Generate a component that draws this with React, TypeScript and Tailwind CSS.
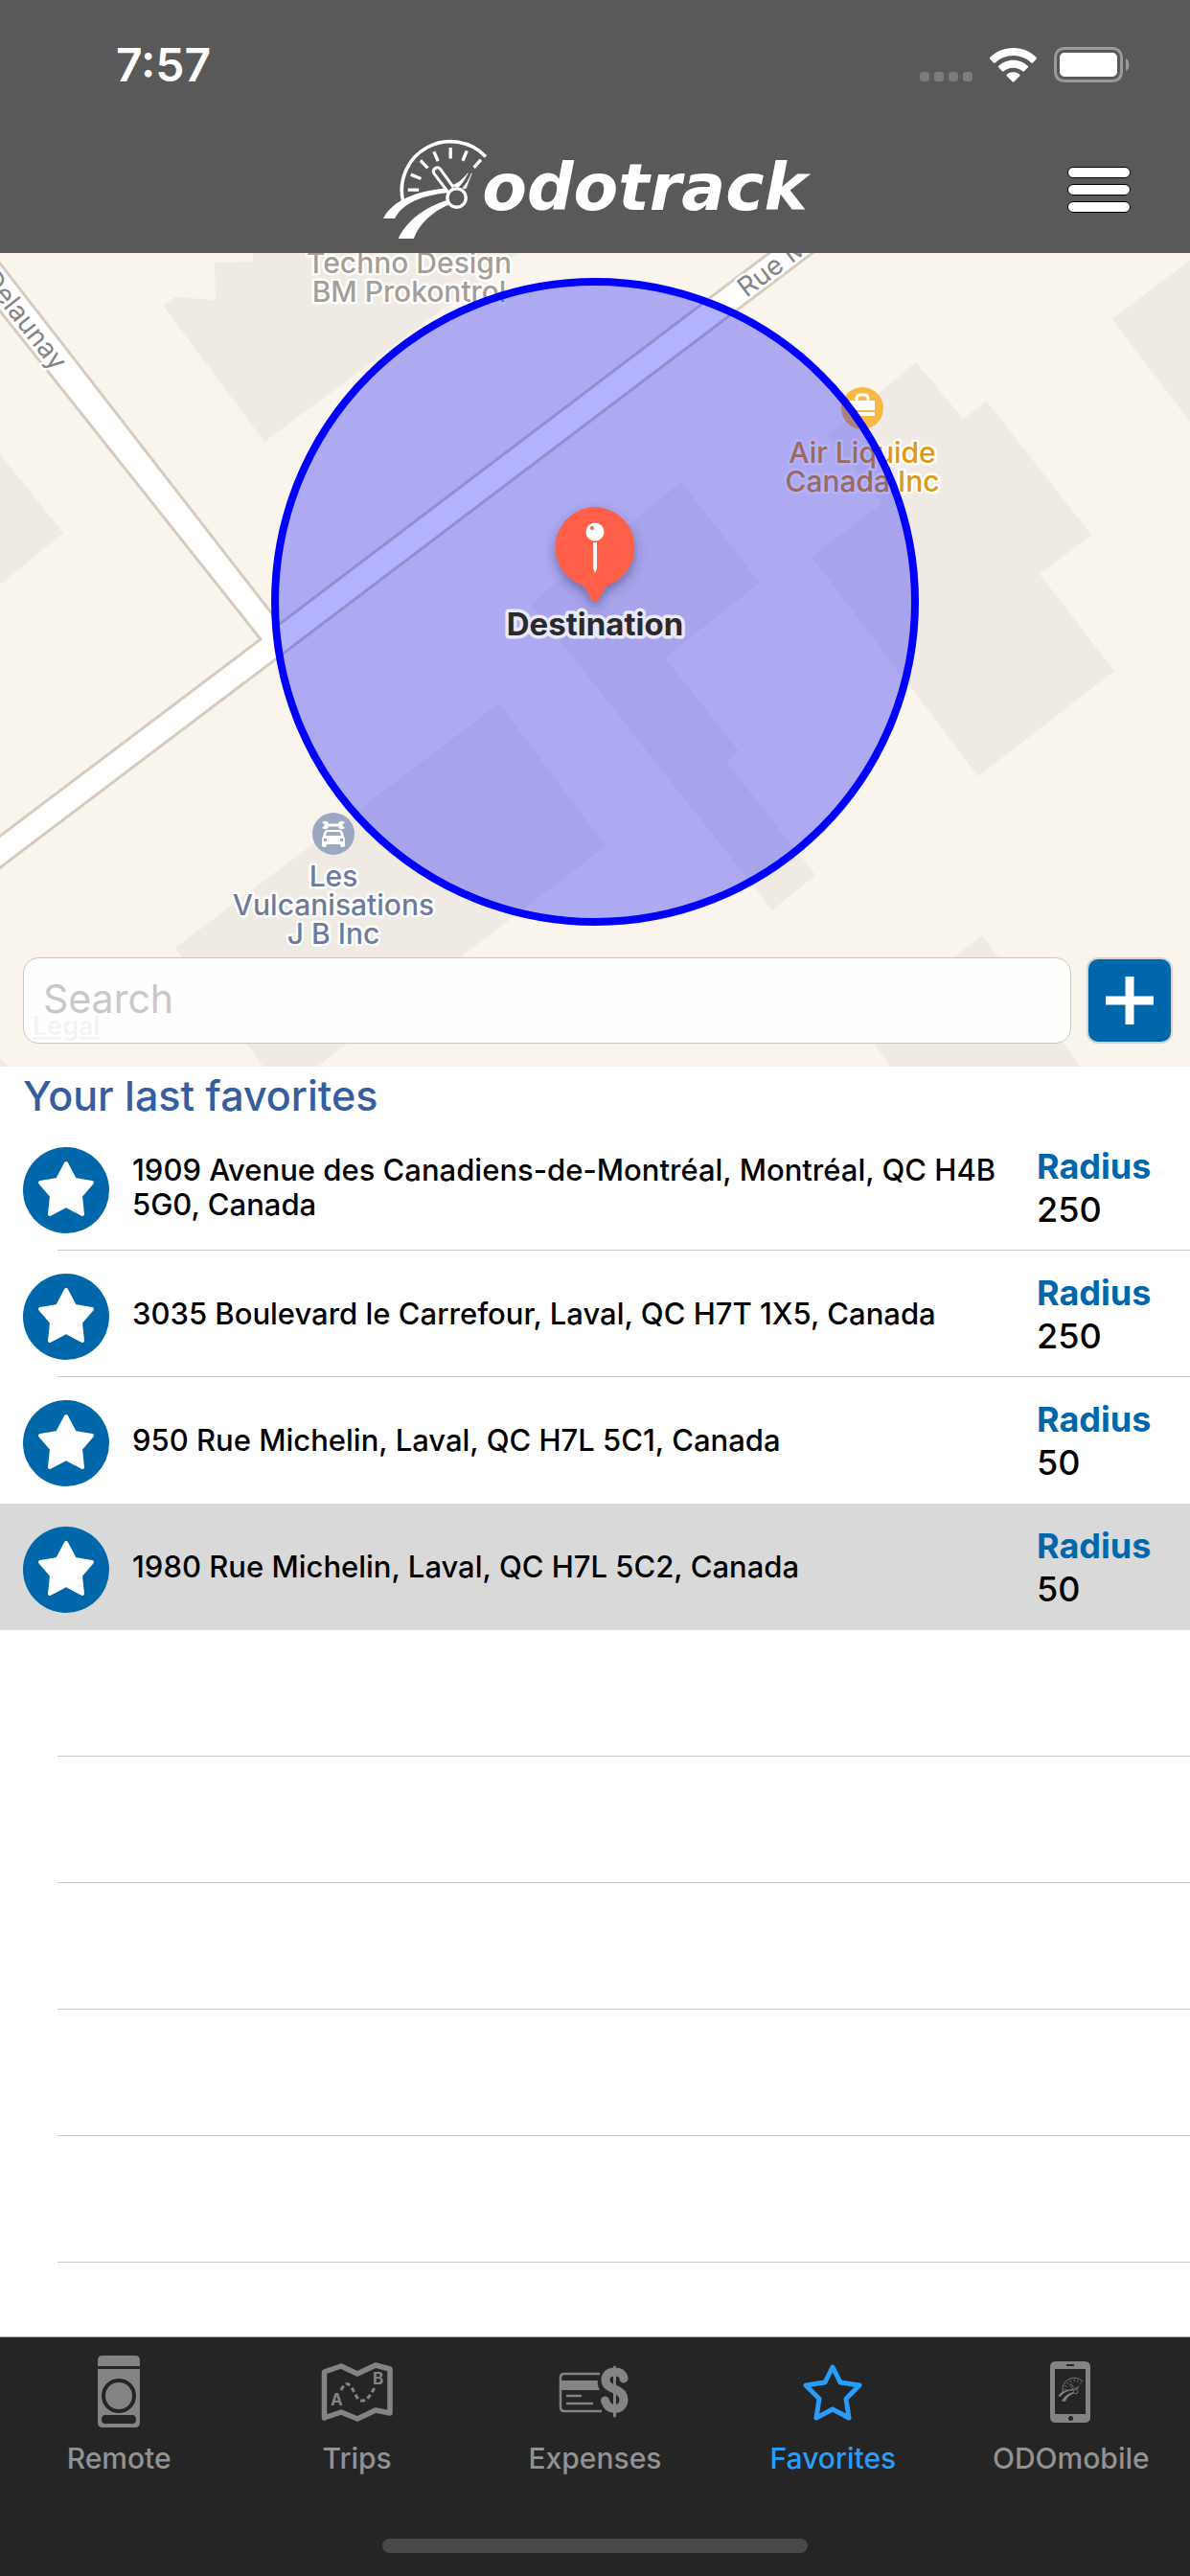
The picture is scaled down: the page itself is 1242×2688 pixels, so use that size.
import { useState } from "react";
import type { ReactNode } from "react";

const FAVORITES = [
  { address: "1909 Avenue des Canadiens-de-Montréal, Montréal, QC H4B 5G0, Canada", radius: 250 },
  { address: "3035 Boulevard le Carrefour, Laval, QC H7T 1X5, Canada", radius: 250 },
  { address: "950 Rue Michelin, Laval, QC H7L 5C1, Canada", radius: 50 },
  { address: "1980 Rue Michelin, Laval, QC H7L 5C2, Canada", radius: 50 },
];

const EMPTY_ROWS = [0, 1, 2, 3, 4];

function LogoMark(props: { className?: string; x?: number; y?: number; width?: number; height?: number }) {
  return (
    <svg {...props} viewBox="45 45 335 320" fill="none" stroke="currentColor" aria-hidden="true">
      <path d="M110 240A152 152 0 0 1 368 100" strokeWidth="11" />
      <path
        d="M258 72V106M309 82L296 113M353 110L331 134M206 84L219 114M164 112L187 136M134 156L166 169M125 204H159"
        strokeWidth="10"
      />
      <path d="M248 208L206 152A12 12 0 0 1 226 139L267 196" strokeWidth="9" />
      <circle cx="277" cy="229" r="29" strokeWidth="10" />
      <path d="M264 190Q290 180 312 152Q298 182 282 196ZM296 198Q312 182 324 152L306 200Z" fill="currentColor" strokeWidth="2" />
      <path
        d="M48 293C78 236 150 208 240 199L252 208L247 213C165 222 110 245 84 293ZM95 356C120 300 180 258 243 237L256 248C200 272 160 310 143 356Z"
        fill="currentColor"
        stroke="none"
      />
    </svg>
  );
}

function StatusBar() {
  return (
    <div className="flex h-[132px] items-start justify-between pl-[121px] pr-[62px] pt-[37px] text-white">
      <span className="text-[48px] font-semibold leading-[62px]">7:57</span>
      <div className="flex items-center pt-3">
        <div className="flex gap-[5px] pt-[25px]">
          <i className="size-[10px] rounded-[3px] bg-[#7c7c7c]" />
          <i className="size-[10px] rounded-[3px] bg-[#7c7c7c]" />
          <i className="size-[10px] rounded-[3px] bg-[#7c7c7c]" />
          <i className="size-[10px] rounded-[3px] bg-[#7c7c7c]" />
        </div>
        <svg className="ml-[18px] h-9 w-[49px]" viewBox="0 0 49 36" fill="currentColor" aria-hidden="true">
          <path d="M24.500 0C34 0 42.500 3.700 48.600 9.800C49.200 10.400 49.200 11.200 48.600 11.800L45 15.400C44.500 15.900 43.800 15.900 43.200 15.400C38.300 10.800 31.700 8 24.500 8S10.700 10.800 5.800 15.400C5.200 15.900 4.500 15.900 4 15.400L.4 11.800C-.2 11.200-.2 10.400.4 9.800C6.500 3.700 15 0 24.500 0Z" />
          <path d="M24.500 12.700C30.400 12.700 35.700 15 39.700 18.700C40.300 19.300 40.300 20 39.700 20.600L36 24.300C35.500 24.800 34.800 24.800 34.200 24.300C31.700 22 28.200 20.700 24.500 20.700S17.300 22 14.800 24.300C14.200 24.800 13.500 24.800 13 24.300L9.300 20.600C8.700 20 8.700 19.300 9.300 18.700C13.300 15 18.600 12.700 24.500 12.700Z" />
          <path d="M24.500 25.300C27 25.300 29.200 26.100 31 27.500C31.700 28 31.700 28.800 31.100 29.400L25.400 35.200C24.900 35.700 24.100 35.700 23.600 35.200L17.900 29.400C17.300 28.800 17.300 28 18 27.500C19.800 26.100 22 25.300 24.500 25.300Z" />
        </svg>
        <svg className="ml-[18px] h-[37px] w-20" viewBox="0 0 80 37" aria-hidden="true">
          <rect x="1.500" y="1.500" width="69" height="34" rx="9" fill="none" stroke="#9b9b9b" strokeWidth="3" />
          <rect x="6" y="6" width="60" height="25" rx="5" fill="#fff" />
          <path d="M75 12C79 14 80 23 75 25Z" fill="#9b9b9b" />
        </svg>
      </div>
    </div>
  );
}

function NavBar() {
  return (
    <div className="grid h-[132px] grid-cols-[1fr_auto_1fr] items-start text-white">
      <div />
      <div className="flex items-start pt-[13px]" role="img" aria-label="odotrack">
        <LogoMark className="h-[107px] w-28" />
        <span className="-ml-2 pt-4 font-['DejaVu_Sans',sans-serif] text-[68px] font-bold italic leading-[70px]">
          odotrack
        </span>
      </div>
      <button aria-label="Menu" className="mr-[62px] mt-[42px] flex flex-col gap-[6px] justify-self-end">
        <span className="h-3 w-[66px] rounded-full border border-black bg-white" />
        <span className="h-3 w-[66px] rounded-full border border-black bg-white" />
        <span className="h-3 w-[66px] rounded-full border border-black bg-white" />
      </button>
    </div>
  );
}

const LABEL = "stroke-white text-[30px] font-medium [paint-order:stroke] [stroke-width:5px] [stroke-linejoin:round]";

function MapView() {
  return (
    <svg
      className="block h-auto w-full"
      viewBox="0 264 1242 849"
      role="img"
      aria-label="Map around the destination"
    >
      <defs>
        <filter id="pinShadow" x="-50%" y="-50%" width="200%" height="200%">
          <feDropShadow dx="0" dy="5" stdDeviation="6" floodColor="#303060" floodOpacity="0.5" />
        </filter>
      </defs>
      <rect y="264" width="1242" height="849" fill="#f9f4ec" />
      <g fill="#efebe4">
        <path d="M170 319L183 310L225 313L224 274L264 273V264H541L276 461Z" />
        <path d="M0 474L66 556L0 610Z" />
        <path d="M521 734L632 883L331 1113H275L183 989Z" />
        <path d="M0 1104L8 1113H0Z" />
        <path d="M711 503L793 608L694 686L771 784L758 795L851 913L806 950L554 630Z" />
        <path d="M956 378L1005 437L1030 419L1139 558L1085 599L1163 700L1021 810L847 581L921 525L864 455Z" />
        <path d="M1161 333L1242 272V440Z" />
        <path d="M1025 976L1128 1113H930L900 1072Z" />
      </g>
      <path
        d="M-10 262L292 651L820 251H865L-10 913V880L272 667L-10 312Z"
        fill="#fff"
        stroke="#d5cbbe"
        strokeWidth="3"
      />
      <g fill="#858585" stroke="#fff" strokeWidth="5" strokeLinejoin="round" className="text-[28px] [paint-order:stroke]">
        <text transform="translate(64 382) rotate(52)" textAnchor="end" dominantBaseline="central">Delaunay</text>
        <text transform="translate(773 303) rotate(-37)" dominantBaseline="central">Rue M</text>
      </g>
      <g textAnchor="middle" fill="#a39e97" className={LABEL}>
        <text x="427" y="285">Techno Design</text>
        <text x="427" y="315">BM Prokontrol</text>
      </g>
      <g>
        <circle cx="900" cy="426" r="22" fill="#f7b844" />
        <path d="M894 418V416Q894 412 898 412H902Q906 412 906 416V418" fill="none" stroke="#fff" strokeWidth="3" />
        <path d="M887 418H913V428H887ZM887 430H913V434H887Z" fill="#fff" />
      </g>
      <g textAnchor="middle" fill="#df9812" className={LABEL}>
        <text x="900" y="483">Air Liquide</text>
        <text x="900" y="513">Canada Inc</text>
      </g>
      <g>
        <circle cx="348" cy="870" r="22" fill="#9ca7c0" />
        <path d="M341 861H355" stroke="#fff" strokeWidth="3" />
        <path d="M336 858Q341 855 343 859V863Q341 867 336 864L339 861ZM360 858Q355 855 353 859V863Q355 867 360 864L357 861Z" fill="#fff" />
        <path
          fillRule="evenodd"
          d="M341 866H355Q357 866 358 869L359 873Q360 874 360 876V882Q360 884 358 884H357Q355 884 355 881H341Q341 884 339 884H338Q336 884 336 882V876Q336 874 337 873L338 869Q339 866 341 866ZM342 868Q341 868 340 872H356Q355 868 354 868ZM341 875H338V878H341ZM358 875H355V878H358Z"
          fill="#fff"
        />
      </g>
      <g textAnchor="middle" fill="#6e7b9b" className={LABEL}>
        <text x="348" y="925">Les</text>
        <text x="348" y="955">Vulcanisations</text>
        <text x="348" y="985">J B Inc</text>
      </g>
      <circle cx="621" cy="628" r="334" fill="#00f" fillOpacity="0.3" stroke="#00f" strokeWidth="8" />
      <path
        d="M621 529A42 42 0 0 1 636 610C627 614 627 628 621 628S615 614 606 610A42 42 0 0 1 621 529Z"
        fill="#ff5e48"
        filter="url(#pinShadow)"
      />
      <circle cx="621" cy="555" r="9.500" fill="#fff" />
      <circle cx="618" cy="551" r="2" fill="#ff5e48" />
      <path d="M619 566H623V593L621 598L619 593Z" fill="#fff" />
      <text
        x="621"
        y="663"
        textAnchor="middle"
        fill="#2a2a2c"
        stroke="#e9e8fb"
        strokeWidth="7"
        strokeLinejoin="round"
        className="text-[33px] font-bold [paint-order:stroke]"
      >
        Destination
      </text>
      <text x="34" y="1080" fill="#8a8a8a" stroke="#fff" strokeWidth="4" className="text-[27px] font-semibold underline [paint-order:stroke]">
        Legal
      </text>
    </svg>
  );
}

function StarBadge() {
  return (
    <svg className="mt-[6px] size-[90px] shrink-0" viewBox="0 0 90 90" aria-hidden="true">
      <circle cx="45" cy="45" r="45" fill="#0067ab" />
      <path
        d="M45 17L54 34L72 37L60 51L62 70L45 61L28 70L30 51L18 37L36 34Z"
        fill="#fff"
        stroke="#fff"
        strokeWidth="4"
        strokeLinejoin="round"
      />
    </svg>
  );
}

function TabIcon({ children }: { children: ReactNode }) {
  return (
    <svg className="size-[76px]" viewBox="0 0 76 76" fill="none" aria-hidden="true">
      {children}
    </svg>
  );
}

const TABS = [
  {
    label: "Remote",
    icon: (
      <TabIcon>
        <path d="M16 11V5Q16 0 21 0H55Q60 0 60 5V11Z" fill="#848484" />
        <path
          fillRule="evenodd"
          d="M16 14H60V70Q60 75 55 75H21Q16 75 16 70ZM38 24A18 18 0 1 0 38 60A18 18 0 1 0 38 24ZM24 62Q20 62 20 67Q20 71 24 71H52Q56 71 56 67Q56 62 52 62Z"
          fill="#848484"
        />
        <circle cx="38" cy="42" r="14" fill="#848484" />
      </TabIcon>
    ),
  },
  {
    label: "Trips",
    icon: (
      <TabIcon>
        <path
          d="M3.500 17L21 11L38 19L57 10L72 14V60L57 57L38 66L21 59L3.500 65Z"
          stroke="#848484"
          strokeWidth="5.500"
          strokeLinejoin="round"
        />
        <path d="M21 36C24 30 27 27 31 32S37 46 42 47S52 42 57 31" stroke="#848484" strokeWidth="3" strokeDasharray="5 3" />
        <text x="10" y="52" fill="#848484" className="text-[17px] font-bold">A</text>
        <text x="54" y="30" fill="#848484" className="text-[17px] font-bold">B</text>
      </TabIcon>
    ),
  },
  {
    label: "Expenses",
    icon: (
      <TabIcon>
        <path d="M43 19H6Q2 19 2 23V54Q2 58 6 58H45" stroke="#848484" strokeWidth="2.500" />
        <path d="M2 26H41Q40 31 43 36H2Z" fill="#848484" />
        <path d="M9 42H23M9 50H35" stroke="#848484" strokeWidth="2.500" strokeLinecap="round" />
        <path
          d="M68 24C67 18 63 17 58.500 17C52 17 49 21 49 25C49 31 53 33 58.500 35C64 37 68 40 68 46C68 52 64 55.500 58.500 55.500C53 55.500 50 52 48.500 47"
          stroke="#848484"
          strokeWidth="9"
          strokeLinecap="round"
        />
        <path d="M58.500 12V63" stroke="#848484" strokeWidth="3" strokeLinecap="round" />
      </TabIcon>
    ),
  },
  {
    label: "Favorites",
    active: true,
    icon: (
      <TabIcon>
        <path
          d="M38 12L46 28L66 31L52 45L55 65L38 56L21 65L24 45L10 31L30 28Z"
          stroke="#2a9dfb"
          strokeWidth="5"
          strokeLinejoin="round"
        />
      </TabIcon>
    ),
  },
  {
    label: "ODOmobile",
    icon: (
      <TabIcon>
        <path
          fillRule="evenodd"
          d="M22 6H52Q58 6 58 12V64Q58 70 52 70H22Q16 70 16 64V12Q16 6 22 6ZM21 14V61H53V14ZM33 9V11H41V9ZM37.500 63A2.500 2.500 0 1 0 37.500 68A2.500 2.500 0 1 0 37.500 63Z"
          fill="#848484"
        />
        <g color="#848484">
          <LogoMark x={24} y={22} width={27} height={27} />
        </g>
      </TabIcon>
    ),
  },
];

export default function App() {
  const [query, setQuery] = useState("");
  return (
    <div className="flex min-h-screen flex-col bg-white font-[Inter,sans-serif] text-black">
      <header className="bg-[#595959]">
        <StatusBar />
        <NavBar />
      </header>

      <section className="relative">
        <MapView />
        <form className="absolute bottom-6 left-6 right-[18px] flex gap-4" onSubmit={(e) => e.preventDefault()}>
          <input
            type="text"
            aria-label="Search"
            placeholder="Search"
            value={query}
            onChange={(e) => setQuery(e.target.value)}
            className="h-[90px] min-w-0 flex-1 rounded-2xl border border-[#c8c8c4] bg-white/90 px-5 pb-1 text-[41px] placeholder:text-[#c7c7cc]"
          />
          <button
            aria-label="Add favorite"
            className="flex size-[90px] items-center justify-center rounded-xl border-2 border-[#d0d4d6] bg-[#0067ab]"
          >
            <svg className="size-[50px]" viewBox="0 0 50 50" stroke="#fff" strokeWidth="9" aria-hidden="true">
              <path d="M25 0V50M0 25H50" />
            </svg>
          </button>
        </form>
      </section>

      <main className="flex-1">
        <h1 className="h-[60px] px-6 pt-1 text-[43px] font-medium leading-[52px] text-[#355e9f]">
          Your last favorites
        </h1>
        <ul>
          {FAVORITES.map((item, i) => {
            const selected = i === FAVORITES.length - 1;
            return (
              <li key={item.address} className={selected ? "bg-[#d9d9d9]" : "bg-white"}>
                <button className="relative flex h-[132px] w-full items-center pl-6 text-left" aria-pressed={selected}>
                  <StarBadge />
                  <span className="ml-6 flex-1 pr-2 text-[31px] font-medium leading-9">{item.address}</span>
                  <span className="flex w-40 shrink-0 flex-col pt-[2px] text-[36px] font-medium leading-[45px]">
                    <span className="font-bold text-[#0067ab]">Radius</span>
                    <span>{item.radius}</span>
                  </span>
                  {i < 2 && <span className="absolute bottom-0 left-[60px] right-0 h-px bg-[#c8c7cc]" />}
                </button>
              </li>
            );
          })}
        </ul>
        <div aria-hidden="true" className="pl-[60px]">
          {EMPTY_ROWS.map((row) => (
            <div key={row} className="h-[132px] border-b border-[#c8c7cc]" />
          ))}
        </div>
      </main>

      <nav className="flex h-[250px] flex-col justify-between border-t border-[#a8a8a8] bg-[#252525] pb-6 pt-[19px]">
        <div className="grid grid-cols-5">
          {TABS.map((tab) => (
            <a
              key={tab.label}
              href={`#${tab.label.toLowerCase()}`}
              className={
                tab.active
                  ? "flex flex-col items-center gap-[13px] text-[30px] font-medium leading-9 text-[#2a9dfb]"
                  : "flex flex-col items-center gap-[13px] text-[30px] font-medium leading-9 text-[#929292]"
              }
            >
              {tab.icon}
              {tab.label}
            </a>
          ))}
        </div>
        <div className="mx-auto h-[15px] w-[444px] rounded-full bg-[#484848]" />
      </nav>
    </div>
  );
}
